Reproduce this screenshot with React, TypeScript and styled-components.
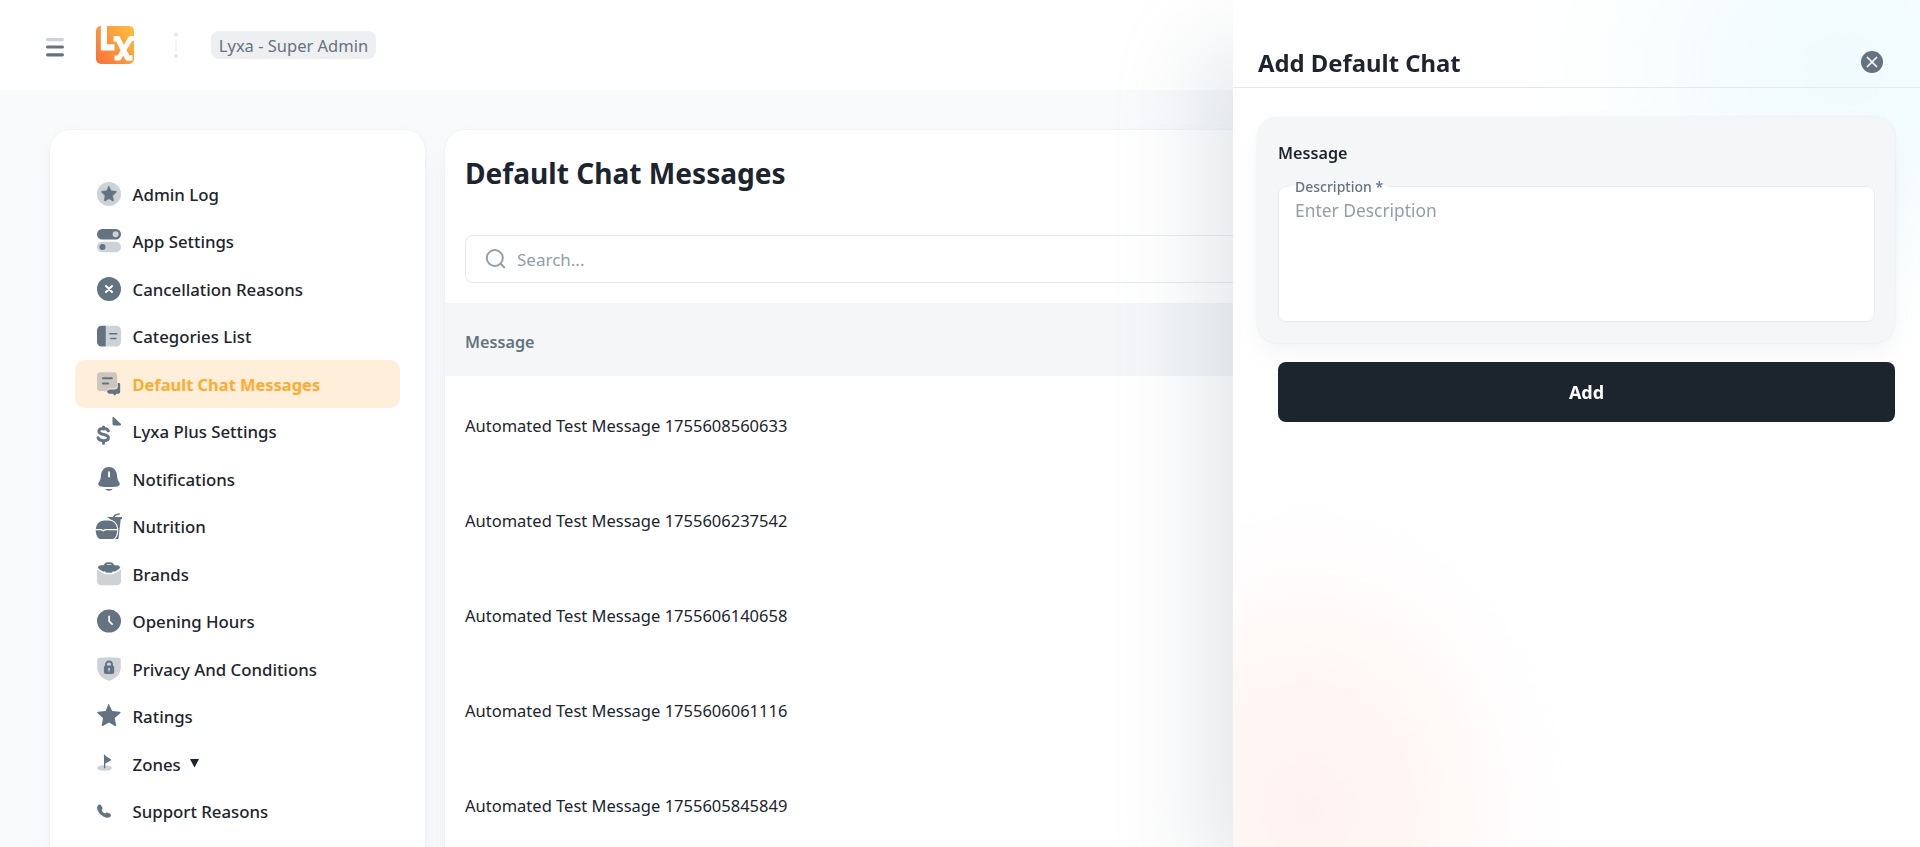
import React from "react";
import styled, { createGlobalStyle, css } from "styled-components";

const INK = "#1C252E";
const SLATE = "#637381";
const MIST = "#CDD2D7";
const MIST_ALPHA = "rgba(99, 115, 129, 0.32)";
const MUTED = "#919EAB";

const GlobalStyle = createGlobalStyle`
  *, *::before, *::after { box-sizing: border-box; }
  html, body { margin: 0; height: 100%; overflow: hidden; }
  body {
    background: #F9FAFC;
    color: ${INK};
    font-family: "Noto Sans", "Open Sans", sans-serif;
    font-size: 16.5px;
  }
`;

const cardShadow = css`
  box-shadow: 0 0 2px rgba(145, 158, 171, 0.2), 0 12px 24px -4px rgba(145, 158, 171, 0.12);
`;

const Page = styled.div`
  height: 847px;
  overflow: hidden;
`;

const Header = styled.header`
  display: flex;
  align-items: center;
  height: 90px;
  padding: 0 43px;
  background: #fff;
`;

const MenuButton = styled.button`
  display: flex;
  padding: 0;
  border: 0;
  background: none;
  margin-top: 5px;
`;

const Logo = styled.a`
  display: flex;
  margin-left: 29px;
`;

const Separator = styled.span`
  display: flex;
  margin-left: 36px;
`;

const RoleChip = styled.span`
  margin-left: 29px;
  width: 165px;
  height: 28px;
  border-radius: 8px;
  background: #EDEFF1;
  color: ${SLATE};
  font-size: 16.5px;
  line-height: 29px;
  text-align: center;
  white-space: nowrap;
`;

const Content = styled.main`
  display: grid;
  grid-template-columns: 375px 1fr;
  gap: 20px;
  padding: 40px 50px 0;
`;

const Card = styled.section`
  height: 900px;
  border-radius: 20px;
  background: #fff;
  ${cardShadow}
`;

const Nav = styled.nav`
  display: flex;
  flex-direction: column;
  padding: 40px 25px;
`;

const NavItem = styled.a<{ $active?: boolean }>`
  display: flex;
  align-items: center;
  gap: 11.5px;
  height: 47.5px;
  padding-left: 22px;
  border-radius: 10px;
  font-size: ${p => (p.$active ? "16.45px" : "16.8px")};
  font-weight: ${p => (p.$active ? 700 : 500)};
  color: ${p => (p.$active ? "#FFAB2E" : INK)};
  background: ${p => (p.$active ? "#FFEEDA" : "transparent")};
`;

const NavLabel = styled.span`
  display: flex;
  align-items: center;
  gap: 9px;
  padding-top: 2px;
  line-height: 24px;
`;

const Icon = styled.svg`
  flex: none;
  overflow: visible;
`;

const Title = styled.h1`
  margin: 0;
  padding: 23px 20px 0;
  font-size: 28.1px;
  line-height: 40px;
  font-weight: 700;
`;

const SearchBox = styled.label`
  display: flex;
  align-items: center;
  gap: 10px;
  height: 48px;
  margin: 42px 20px 20px;
  padding-left: 19px;
  border: 1px solid #E8EBEE;
  border-radius: 8px;
  color: ${MUTED};
  font-size: 17px;
`;

const TableHead = styled.div`
  display: flex;
  align-items: center;
  height: 73px;
  padding: 4px 20px 0;
  background: #F4F6F8;
  color: ${SLATE};
  font-size: 16.2px;
  font-weight: 600;
`;

const Row = styled.div`
  display: flex;
  align-items: center;
  height: 95px;
  padding: 4px 20px 0;
`;

const Drawer = styled.aside`
  position: fixed;
  top: 0;
  right: 0;
  width: 687px;
  height: 847px;
  background:
    radial-gradient(ellipse 330px 290px at 610px 70px, rgba(0, 184, 217, 0.06) 0%, rgba(0, 184, 217, 0.045) 35%, rgba(0, 184, 217, 0.012) 72%, transparent 100%),
    radial-gradient(ellipse 270px 320px at 75px 810px, rgba(255, 86, 48, 0.07) 0%, rgba(255, 86, 48, 0.05) 40%, rgba(255, 86, 48, 0.013) 75%, transparent 100%),
    #fff;
  box-shadow: -40px 40px 80px -8px rgba(145, 158, 171, 0.24);
`;

const DrawerHeader = styled.div`
  display: flex;
  align-items: center;
  justify-content: space-between;
  height: 88px;
  padding: 38px 37px 0 25px;
  border-bottom: 1px solid #E4E9EC;
`;

const DrawerTitle = styled.h2`
  margin: 0;
  padding-top: 1px;
  font-size: 23.85px;
  line-height: 36px;
  font-weight: 700;
`;

const CloseButton = styled.button`
  display: flex;
  padding: 0;
  border: 0;
  background: none;
  margin-bottom: 1px;
`;

const FormCard = styled.div`
  margin: 29px 25px 0 24px;
  height: 226px;
  padding: 24px 20px 20px 21px;
  border-radius: 20px;
  background: #F4F6F8;
  ${cardShadow}
`;

const FormLabel = styled.div`
  font-size: 16.2px;
  line-height: 24px;
  font-weight: 600;
`;

const Field = styled.fieldset`
  height: 146px;
  margin: 11px 0 0;
  padding: 2px 16px 0;
  border: 1px solid #E8EBEE;
  border-radius: 8px;
  background: #fff;
  color: ${MUTED};
  font-size: 17.4px;
  line-height: 24px;
`;

const Legend = styled.legend`
  margin-left: -6px;
  padding: 1px 5px 0 6px;
  color: ${SLATE};
  font-size: 14px;
  line-height: 19px;
  font-weight: 500;
`;

const SubmitButton = styled.button`
  display: block;
  width: 617px;
  height: 60px;
  margin: 19px 25px 0 45px;
  border: 0;
  border-radius: 8px;
  background: ${INK};
  color: #fff;
  font-family: inherit;
  font-size: 18px;
  font-weight: 700;
`;

const STAR = "M12 1.2l3.2 6.9 7.5.9c.9.1 1.1.9.5 1.5l-5.5 5.2 1.4 7.4c.1.8-.5 1.2-1.2.8L12 20.3l-6.1 3.6c-.7.4-1.3 0-1.2-.8l1.4-7.4-5.5-5.2c-.6-.6-.4-1.4.5-1.5l7.5-.9L11.400 1.200c.2-.4.4-.4.6 0z";

const icons: Record<string, React.ReactNode> = {
  log: (
    <>
      <circle cx="12" cy="12" r="12" fill={MIST_ALPHA} />
      <path transform="translate(4.300 3.600) scale(.64)" d={STAR} fill={SLATE} stroke={SLATE} strokeWidth="1" />
    </>
  ),
  settings: (
    <>
      <rect x="0" y="0" width="24" height="10.400" rx="5.200" fill={SLATE} />
      <circle cx="18.600" cy="5.200" r="3" fill={MIST} />
      <rect x="0" y="12.800" width="24" height="10.400" rx="5.200" fill={MIST_ALPHA} />
      <circle cx="5.500" cy="18" r="3" fill={SLATE} />
    </>
  ),
  cancel: (
    <>
      <circle cx="12" cy="12" r="12" fill={SLATE} />
      <path d="M9 9l6 6M15 9l-6 6" stroke="#fff" strokeWidth="2" strokeLinecap="round" />
    </>
  ),
  categories: (
    <>
      <path d="M8.800 1.800h10.700A4.500 4.500 0 0124 6.300v11.700a4.500 4.500 0 01-4.500 4.500H8.800z" fill={MIST_ALPHA} />
      <path d="M8.800 1.800H4.500A4.500 4.500 0 000 6.300V18a4.500 4.500 0 004.500 4.500h4.300z" fill={SLATE} />
      <path d="M12.800 9.800h7M13.800 14.600h5" stroke={SLATE} strokeWidth="1.500" strokeLinecap="round" />
    </>
  ),
  chat: (
    <>
      <path d="M3.500 0.200h13.200A3.500 3.500 0 0120.200 3.700v10.300c0 1.600-.8 2.600-2.500 2.600h-5.500c-1.300 0-1.700 1-2.200 2-.7.900-2 1.200-2.800.3H3.500A3.500 3.500 0 010 15.400V3.700A3.500 3.500 0 013.500.200z" fill={MIST_ALPHA} />
      <path d="M20.800 11h1c.900 0 1.400.600 1.400 1.500v6.700c0 1.800-1 2.600-2.500 2.600h-1.200L17.800 23.700l-1.900-1.900h-2.600c-1.800 0-2.800-.9-3.300-2.400.8-1.500 1.500-2 2.800-2h4.700c2.300 0 3.300-1.100 3.300-3.200z" fill={SLATE} />
      <path d="M6 6.300h8.800M6 11.500h5.200" stroke={SLATE} strokeWidth="2.100" strokeLinecap="round" />
    </>
  ),
  plus: (
    <>
      <path d="M11.300 11.800c-.7-1.500-2.300-2.200-4.800-2.200-2.800 0-4.600 1-4.600 2.900 0 4.300 9.500 1.700 9.500 6 0 2.200-2 3.200-4.800 3.200-2.900 0-4.800-1-5.500-2.800M6.500 8v2M6.500 22v2.200" fill="none" stroke={SLATE} strokeWidth="3" strokeLinecap="round" />
      <path d="M15.500-1.500c.300-.900 1-.800 1.700-.100l6.500 6.400c.700.800.400 1.600-.5 1.600H17.500c-1.200 0-2-.800-2-2z" fill={SLATE} />
    </>
  ),
  bell: (
    <>
      <path fillRule="evenodd" d="M12 0c4.500 0 7.500 3.300 8 8 .3 3.800.8 5.500 2.300 7.600 1.300 2-.2 3.600-2.200 3.800-5.200.8-11 .8-16.200 0-2-.2-3.500-1.800-2.200-3.800C3.200 13.500 3.700 11.800 4 8c.5-4.700 3.500-8 8-8zm-.9 4.600v5.700h1.900V4.600z" fill={SLATE} />
      <path d="M8.300 21.800c2.400.4 5 .4 7.400 0-.7 1.300-2 2-3.700 2s-3-.7-3.700-2z" fill={SLATE} />
    </>
  ),
  nutrition: (
    <>
      <path d="M16.400 3.500l1.600-2.300 4.300-1.300" fill="none" stroke={SLATE} strokeWidth="1.500" strokeLinecap="round" />
      <path d="M10.300 3.100H24.500c.7 0 .9 2.200.2 2.200h-1L21.600 24c-.1.700-.6 1.100-1.300 1.100H14V6z" fill={SLATE} />
      <path d="M-1.200 14.900C-.7 9.800 3 6.400 7.500 6.400h4c4.500 0 8.200 3.400 8.600 8.500v2.500c-.3 4.500-2.600 7.700-5.500 7.700H4.300c-2.900 0-5.200-3.200-5.500-7.700z" fill={SLATE} stroke="#fff" strokeWidth="2.400" paintOrder="stroke" />
      <path d="M-1.500 15.600h5.700l2 1.200 2-1.200h12" fill="none" stroke="#fff" strokeWidth="1.300" />
    </>
  ),
  brands: (
    <>
      <path d="M0 7.200c2 2 4.500 3.400 7 4.200l1.500.8h7l1.500-.8c2.500-.8 5-2.200 7-4.200v11.800a4.300 4.300 0 01-4.300 4.300H4.300A4.300 4.300 0 010 19z" fill={MIST} />
      <path d="M7 3.300C7.500 1.500 8.700.600 10.300.600h3.400c1.600 0 2.800.900 3.300 2.700l3.500.3c1.400.2 2.300 1 2.500 2.100-1.600 1.700-3.700 3-6 3.900l-1-.8-1 1.800H9L8 8.800l-1 .8c-2.300-.9-4.400-2.200-6-3.900.200-1.100 1.100-1.900 2.500-2.100z" fill={SLATE} stroke={SLATE} strokeWidth=".4" />
      <path d="M9.300 2.900c.2-.6.700-.8 1.300-.8h2.800c.6 0 1.100.2 1.300.8z" fill={MIST} />
    </>
  ),
  clock: (
    <>
      <ellipse cx="12" cy="12" rx="12" ry="11.600" fill={SLATE} />
      <path d="M12.100 7.300v4.800l3 3" fill="none" stroke="#fff" strokeWidth="1.700" strokeLinecap="round" strokeLinejoin="round" />
    </>
  ),
  privacy: (
    <>
      <path d="M2.500.8c6-.8 13-.8 19 0 1.500.2 2.300 1 2.300 2.500v6.500C23.800 17 19 22 12 23.800 5 22 .2 17 .2 9.800V3.300C.2 1.800 1 1 2.500.8z" fill={MIST} />
      <rect x="6.900" y="8.500" width="10.300" height="8.500" rx="2" fill={SLATE} />
      <path d="M9 9V7.500a3 3 0 016 0V9" fill="none" stroke={SLATE} strokeWidth="1.900" />
      <circle cx="12" cy="12" r="1" fill={MIST} />
      <path d="M12 12v2.600" stroke={MIST} strokeWidth="1.100" />
    </>
  ),
  star: <path transform="translate(0 -.8) scale(1 .95)" d={STAR} fill={SLATE} />,
  zone: (
    <>
      <ellipse cx="7.500" cy="16" rx="7.500" ry="2.800" fill={MIST} />
      <path d="M7.600 3.200v12.500" stroke={SLATE} strokeWidth="1.300" strokeLinecap="round" />
      <path d="M7.500 3.200l6.200 4c.600.400.600 1 0 1.300l-6.200 3.400z" fill={SLATE} />
    </>
  ),
  phone: (
    <path d="M.8 6.700C1.900 5.400 3.400 5.200 4.200 6.500l1 1.700c.6 1 .2 1.900-.6 2.700.5 1.700 1.900 3 3.700 3.500.8-1 1.800-1.200 2.800-.7l1.900 1c1.200.7 1.300 2 .3 3-1.500 1.500-4 1.300-6.500.1-3-1.500-5.500-4.200-6.400-7.200-.5-1.600-.3-3 .4-3.900z" fill={SLATE} />
  ),
};

const navItems: { icon: string; label: string; active?: boolean; expandable?: boolean }[] = [
  { icon: "log", label: "Admin Log" },
  { icon: "settings", label: "App Settings" },
  { icon: "cancel", label: "Cancellation Reasons" },
  { icon: "categories", label: "Categories List" },
  { icon: "chat", label: "Default Chat Messages", active: true },
  { icon: "plus", label: "Lyxa Plus Settings" },
  { icon: "bell", label: "Notifications" },
  { icon: "nutrition", label: "Nutrition" },
  { icon: "brands", label: "Brands" },
  { icon: "clock", label: "Opening Hours" },
  { icon: "privacy", label: "Privacy And Conditions" },
  { icon: "star", label: "Ratings" },
  { icon: "zone", label: "Zones", expandable: true },
  { icon: "phone", label: "Support Reasons" },
];

const messages = ["1755608560633", "1755606237542", "1755606140658", "1755606061116", "1755605845849"];

export default function App() {
  return (
    <Page>
      <GlobalStyle />
      <Header>
        <MenuButton aria-label="Menu">
          <Icon width="24" height="24" viewBox="0 0 24 24">
            <rect x="3" y="2" width="18" height="3.200" rx="1.600" fill={MIST} />
            <rect x="3" y="9.400" width="18" height="3.200" rx="1.600" fill={SLATE} />
            <rect x="3" y="17.200" width="18" height="3.200" rx="1.600" fill={SLATE} />
          </Icon>
        </MenuButton>
        <Logo aria-label="Lyxa">
          <Icon width="38" height="38" viewBox="0 0 38 38">
            <defs>
              <linearGradient id="brand" x1="0" y1="1" x2="1" y2="0.200">
                <stop offset="0" stopColor="#F7703A" />
                <stop offset="1" stopColor="#FFBA3D" />
              </linearGradient>
              <clipPath id="tile"><rect width="38" height="38" rx="5" /></clipPath>
            </defs>
            <rect width="38" height="38" rx="5" fill="url(#brand)" />
            <g clipPath="url(#tile)" fill="none" stroke="#fff">
              <path d="M7.900 -1v22.300H18.500" strokeWidth="6.200" />
              <path d="M17.500 12.800h4.300L31.500 32h5" strokeWidth="5.400" strokeLinejoin="round" />
              <path d="M38.500 12.500h-4L23 32h-4.500" strokeWidth="5" strokeLinejoin="round" />
            </g>
          </Icon>
        </Logo>
        <Separator>
          <Icon width="12" height="28" viewBox="0 0 12 28" fill="#E4E7EB">
            <circle cx="6" cy="3.500" r="2" />
            <rect x="5.500" y="8" width="1" height="12" />
            <circle cx="6" cy="25" r="2" />
          </Icon>
        </Separator>
        <RoleChip>Lyxa - Super Admin</RoleChip>
      </Header>

      <Content>
        <Card>
          <Nav>
            {navItems.map(item => (
              <NavItem key={item.label} $active={item.active}>
                <Icon width="24" height="24" viewBox="0 0 24 24">{icons[item.icon]}</Icon>
                <NavLabel>
                  {item.label}
                  {item.expandable && (
                    <Icon width="9" height="9" viewBox="0 0 9 9"><path d="M0 -1h9L4.500 7.500z" fill={INK} /></Icon>
                  )}
                </NavLabel>
              </NavItem>
            ))}
          </Nav>
        </Card>

        <Card>
          <Title>Default Chat Messages</Title>
          <SearchBox>
            <Icon width="22" height="22" viewBox="0 0 22 22" fill="none" stroke={MUTED} strokeWidth="2">
              <circle cx="9.800" cy="10" r="8" />
              <path d="M15.500 15.700l3.700 3.500" strokeLinecap="round" />
            </Icon>
            Search...
          </SearchBox>
          <TableHead>Message</TableHead>
          {messages.map(id => (
            <Row key={id}>Automated Test Message {id}</Row>
          ))}
        </Card>
      </Content>

      <Drawer>
        <DrawerHeader>
          <DrawerTitle>Add Default Chat</DrawerTitle>
          <CloseButton aria-label="Close">
            <Icon width="22" height="22" viewBox="0 0 22 22">
              <circle cx="11" cy="11" r="11" fill={SLATE} />
              <path d="M6.500 6.500l9 9M15.500 6.500l-9 9" stroke="#fff" strokeWidth="1.700" strokeLinecap="round" />
            </Icon>
          </CloseButton>
        </DrawerHeader>
        <FormCard>
          <FormLabel>Message</FormLabel>
          <Field>
            <Legend>Description *</Legend>
            Enter Description
          </Field>
        </FormCard>
        <SubmitButton>Add</SubmitButton>
      </Drawer>
    </Page>
  );
}
